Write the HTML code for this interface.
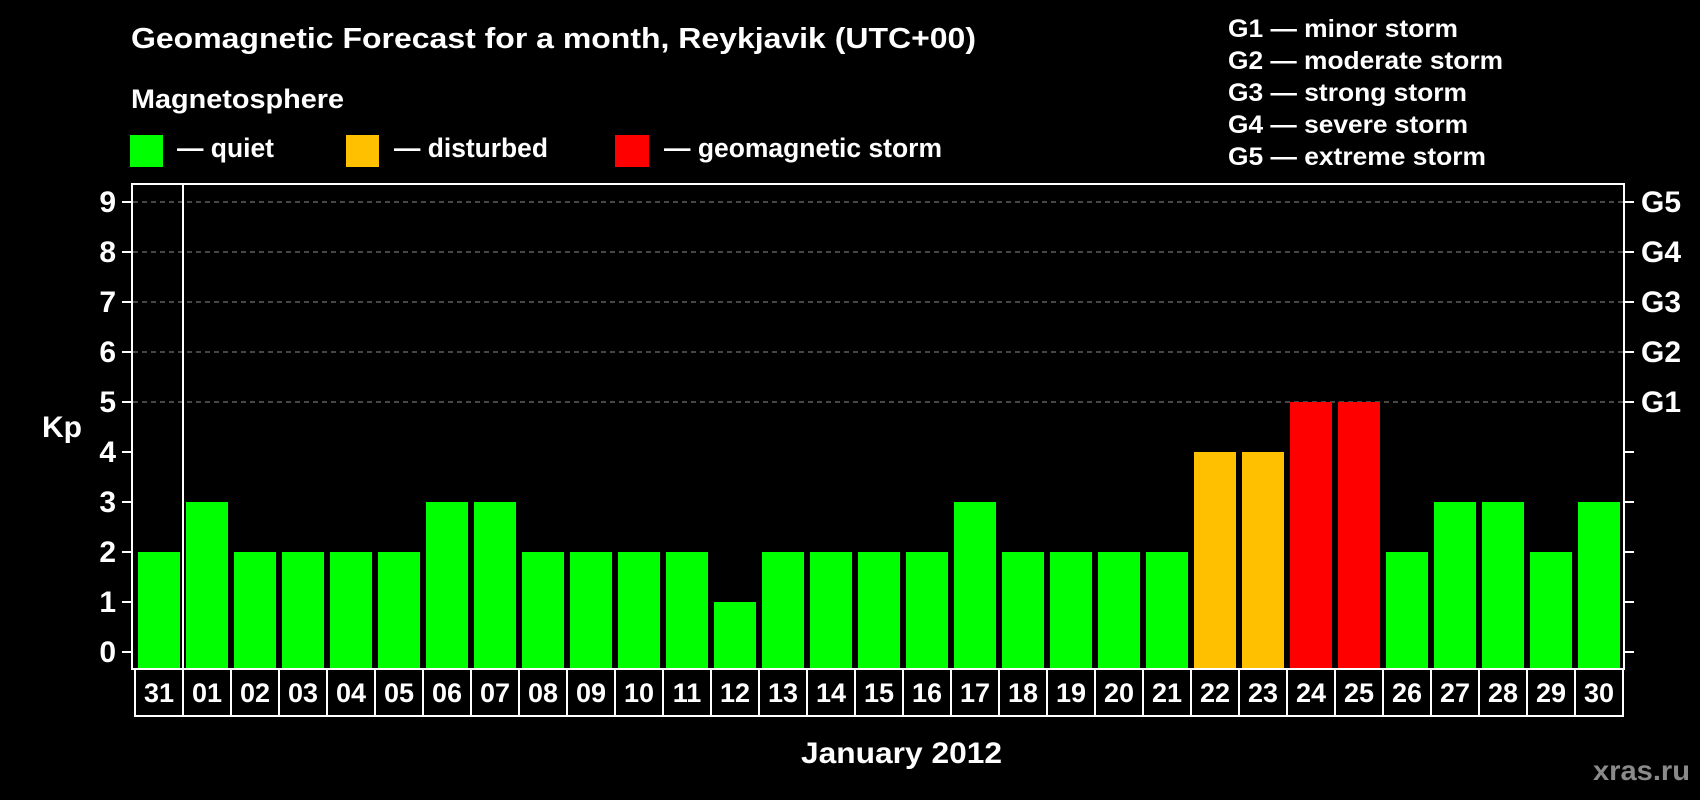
<!DOCTYPE html>
<html><head><meta charset="utf-8"><style>
html,body{margin:0;padding:0;background:#000;width:1700px;height:800px;overflow:hidden}
svg{display:block}
text{font-family:"Liberation Sans",Arial,sans-serif;font-weight:bold;fill:#fff}
</style></head><body>
<svg width="1700" height="800" viewBox="0 0 1700 800" xmlns="http://www.w3.org/2000/svg">
<rect width="1700" height="800" fill="#000"/>
<text x="131" y="48" font-size="29" textLength="845" lengthAdjust="spacingAndGlyphs">Geomagnetic Forecast for a month, Reykjavik (UTC+00)</text>
<text x="131" y="108" font-size="27" textLength="213" lengthAdjust="spacingAndGlyphs">Magnetosphere</text>
<rect x="130" y="135" width="33" height="32" fill="#00ff00"/>
<rect x="346" y="135" width="33" height="32" fill="#ffc000"/>
<rect x="615" y="135" width="34" height="32" fill="#ff0000"/>
<text x="177" y="157" font-size="27" textLength="97" lengthAdjust="spacingAndGlyphs">— quiet</text>
<text x="394" y="157" font-size="27" textLength="154" lengthAdjust="spacingAndGlyphs">— disturbed</text>
<text x="664" y="157" font-size="27" textLength="278" lengthAdjust="spacingAndGlyphs">— geomagnetic storm</text>
<g font-size="25">
<text x="1228" y="37" textLength="230" lengthAdjust="spacingAndGlyphs">G1 — minor storm</text>
<text x="1228" y="69" textLength="275" lengthAdjust="spacingAndGlyphs">G2 — moderate storm</text>
<text x="1228" y="101" textLength="239" lengthAdjust="spacingAndGlyphs">G3 — strong storm</text>
<text x="1228" y="133" textLength="240" lengthAdjust="spacingAndGlyphs">G4 — severe storm</text>
<text x="1228" y="165" textLength="258" lengthAdjust="spacingAndGlyphs">G5 — extreme storm</text>
</g>
<g stroke="#8c8c8c" stroke-width="1" stroke-dasharray="5,4">
<line x1="133" y1="202" x2="1623" y2="202"/>
<line x1="133" y1="252" x2="1623" y2="252"/>
<line x1="133" y1="302" x2="1623" y2="302"/>
<line x1="133" y1="352" x2="1623" y2="352"/>
<line x1="133" y1="402" x2="1623" y2="402"/>
</g>
<g fill="#00ff00">
<rect x="138" y="552" width="42" height="116"/>
<rect x="186" y="502" width="42" height="166"/>
<rect x="234" y="552" width="42" height="116"/>
<rect x="282" y="552" width="42" height="116"/>
<rect x="330" y="552" width="42" height="116"/>
<rect x="378" y="552" width="42" height="116"/>
<rect x="426" y="502" width="42" height="166"/>
<rect x="474" y="502" width="42" height="166"/>
<rect x="522" y="552" width="42" height="116"/>
<rect x="570" y="552" width="42" height="116"/>
<rect x="618" y="552" width="42" height="116"/>
<rect x="666" y="552" width="42" height="116"/>
<rect x="714" y="602" width="42" height="66"/>
<rect x="762" y="552" width="42" height="116"/>
<rect x="810" y="552" width="42" height="116"/>
<rect x="858" y="552" width="42" height="116"/>
<rect x="906" y="552" width="42" height="116"/>
<rect x="954" y="502" width="42" height="166"/>
<rect x="1002" y="552" width="42" height="116"/>
<rect x="1050" y="552" width="42" height="116"/>
<rect x="1098" y="552" width="42" height="116"/>
<rect x="1146" y="552" width="42" height="116"/>
<rect x="1386" y="552" width="42" height="116"/>
<rect x="1434" y="502" width="42" height="166"/>
<rect x="1482" y="502" width="42" height="166"/>
<rect x="1530" y="552" width="42" height="116"/>
<rect x="1578" y="502" width="42" height="166"/>
</g>
<g fill="#ffc000">
<rect x="1194" y="452" width="42" height="216"/>
<rect x="1242" y="452" width="42" height="216"/>
</g>
<g fill="#ff0000">
<rect x="1290" y="402" width="42" height="266"/>
<rect x="1338" y="402" width="42" height="266"/>
</g>
<g stroke="#fff" stroke-width="2" fill="none">
<rect x="132" y="184" width="1492" height="485"/>
<line x1="183" y1="184" x2="183" y2="669"/>
<rect x="135" y="669" width="1488" height="47"/>
</g>
<g stroke="#fff" stroke-width="2">
<line x1="183" y1="669" x2="183" y2="716"/><line x1="231" y1="669" x2="231" y2="716"/><line x1="279" y1="669" x2="279" y2="716"/><line x1="327" y1="669" x2="327" y2="716"/><line x1="375" y1="669" x2="375" y2="716"/><line x1="423" y1="669" x2="423" y2="716"/><line x1="471" y1="669" x2="471" y2="716"/><line x1="519" y1="669" x2="519" y2="716"/><line x1="567" y1="669" x2="567" y2="716"/><line x1="615" y1="669" x2="615" y2="716"/><line x1="663" y1="669" x2="663" y2="716"/><line x1="711" y1="669" x2="711" y2="716"/><line x1="759" y1="669" x2="759" y2="716"/><line x1="807" y1="669" x2="807" y2="716"/><line x1="855" y1="669" x2="855" y2="716"/><line x1="903" y1="669" x2="903" y2="716"/><line x1="951" y1="669" x2="951" y2="716"/><line x1="999" y1="669" x2="999" y2="716"/><line x1="1047" y1="669" x2="1047" y2="716"/><line x1="1095" y1="669" x2="1095" y2="716"/><line x1="1143" y1="669" x2="1143" y2="716"/><line x1="1191" y1="669" x2="1191" y2="716"/><line x1="1239" y1="669" x2="1239" y2="716"/><line x1="1287" y1="669" x2="1287" y2="716"/><line x1="1335" y1="669" x2="1335" y2="716"/><line x1="1383" y1="669" x2="1383" y2="716"/><line x1="1431" y1="669" x2="1431" y2="716"/><line x1="1479" y1="669" x2="1479" y2="716"/><line x1="1527" y1="669" x2="1527" y2="716"/><line x1="1575" y1="669" x2="1575" y2="716"/>
</g>
<g stroke="#fff" stroke-width="2">
<line x1="122" y1="202" x2="131" y2="202"/><line x1="122" y1="252" x2="131" y2="252"/><line x1="122" y1="302" x2="131" y2="302"/><line x1="122" y1="352" x2="131" y2="352"/><line x1="122" y1="402" x2="131" y2="402"/><line x1="122" y1="452" x2="131" y2="452"/><line x1="122" y1="502" x2="131" y2="502"/><line x1="122" y1="552" x2="131" y2="552"/><line x1="122" y1="602" x2="131" y2="602"/><line x1="122" y1="652" x2="131" y2="652"/>
<line x1="1625" y1="202" x2="1634" y2="202"/><line x1="1625" y1="252" x2="1634" y2="252"/><line x1="1625" y1="302" x2="1634" y2="302"/><line x1="1625" y1="352" x2="1634" y2="352"/><line x1="1625" y1="402" x2="1634" y2="402"/><line x1="1625" y1="452" x2="1634" y2="452"/><line x1="1625" y1="502" x2="1634" y2="502"/><line x1="1625" y1="552" x2="1634" y2="552"/><line x1="1625" y1="602" x2="1634" y2="602"/><line x1="1625" y1="652" x2="1634" y2="652"/>
</g>
<g font-size="30" text-anchor="end">
<text x="116" y="212">9</text><text x="116" y="262">8</text><text x="116" y="312">7</text><text x="116" y="362">6</text><text x="116" y="412">5</text><text x="116" y="462">4</text><text x="116" y="512">3</text><text x="116" y="562">2</text><text x="116" y="612">1</text><text x="116" y="662">0</text>
</g>
<text x="42" y="437" font-size="30">Kp</text>
<g font-size="30">
<text x="1641" y="212">G5</text><text x="1641" y="262">G4</text><text x="1641" y="312">G3</text><text x="1641" y="362">G2</text><text x="1641" y="412">G1</text>
</g>
<g font-size="27" text-anchor="middle">
<text x="159" y="702">31</text><text x="207" y="702">01</text><text x="255" y="702">02</text><text x="303" y="702">03</text><text x="351" y="702">04</text><text x="399" y="702">05</text><text x="447" y="702">06</text><text x="495" y="702">07</text><text x="543" y="702">08</text><text x="591" y="702">09</text><text x="639" y="702">10</text><text x="687" y="702">11</text><text x="735" y="702">12</text><text x="783" y="702">13</text><text x="831" y="702">14</text><text x="879" y="702">15</text><text x="927" y="702">16</text><text x="975" y="702">17</text><text x="1023" y="702">18</text><text x="1071" y="702">19</text><text x="1119" y="702">20</text><text x="1167" y="702">21</text><text x="1215" y="702">22</text><text x="1263" y="702">23</text><text x="1311" y="702">24</text><text x="1359" y="702">25</text><text x="1407" y="702">26</text><text x="1455" y="702">27</text><text x="1503" y="702">28</text><text x="1551" y="702">29</text><text x="1599" y="702">30</text>
</g>
<text x="801" y="763" font-size="30" textLength="201" lengthAdjust="spacingAndGlyphs">January 2012</text>
<text x="1593" y="780" font-size="28" style="fill:#8a8a8a" textLength="97" lengthAdjust="spacingAndGlyphs">xras.ru</text>
</svg>
</body></html>
